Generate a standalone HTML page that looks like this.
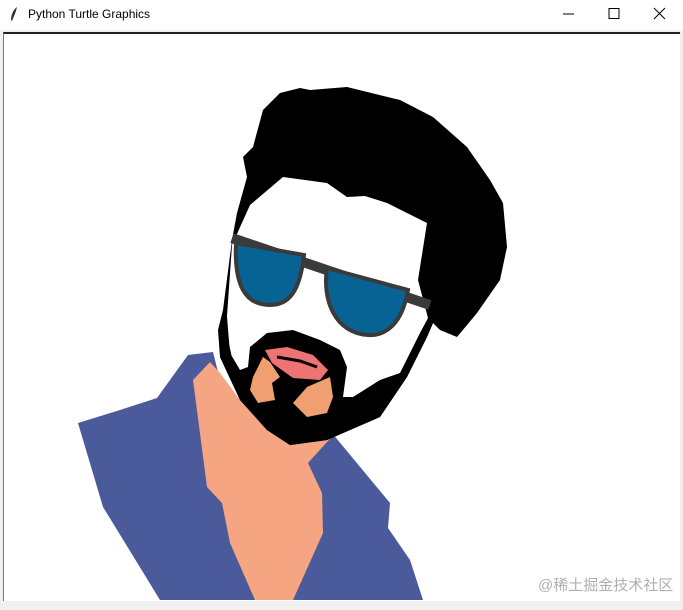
<!DOCTYPE html>
<html><head><style>
body{margin:0;width:683px;height:610px;overflow:hidden;background:#f0f0f0;font-family:"Liberation Sans","Noto Sans CJK SC",sans-serif;position:relative}
.tb{position:absolute;left:0;top:0;width:683px;height:30px;background:#fff}
.t{position:absolute;left:28px;top:7px;font-size:12px;color:#000}
.cv{position:absolute;left:3px;top:32px;width:676px;height:567px;background:#fff;border-top:2px solid #222;border-left:1px solid #777}
.wm{position:absolute;left:538px;top:574px;font-size:15px;color:#b0b0b0}
</style></head><body>
<div class="tb">
<svg style="position:absolute;left:9px;top:6px" width="10" height="16"><path d="M8 1 C4 4 2 9 2 14 L3 15 C5 10 7 6 8 1Z" fill="#333"/></svg>
<div class="t">Python Turtle Graphics</div>
<svg style="position:absolute;left:560px;top:6px" width="110" height="16">
<line x1="3" y1="8" x2="14" y2="8" stroke="#000"/>
<rect x="49" y="2.5" width="10" height="10" fill="none" stroke="#000"/>
<path d="M94 2 L105 13 M105 2 L94 13" stroke="#000"/>
</svg>
</div>
<div class="cv"></div>
<svg style="position:absolute;left:0;top:0" width="683" height="610">
<!-- shirt -->
<polygon fill="#4b5a9a" points="78,423 120,410 157,398 188,355 213,352 225,400 300,440 327,427 390,503 388,528 410,560 423,600 160,600 103,507"/>
<!-- skin -->
<polygon fill="#f5a582" points="193,380 210,362 220,373 240,400 267,430 290,445 327,440 338,430 308,463 322,493 323,533 293,600 255,600 230,543 222,503 207,487"/>
<!-- hair/head black -->
<polygon fill="#000" points="280,93 300,88 310,90 347,87 400,100 433,117 467,147 490,180 503,203 507,247 500,280 477,313 457,337 440,330 433,323 427,337 407,377 380,417 357,427 327,440 290,445 267,430 240,400 220,357 218,330 223,310 232,240 237,213 247,177 243,157 253,147 263,110"/>
<!-- face white -->
<polygon fill="#fff" points="283,177 305,180 327,183 347,197 365,196 387,203 427,223 418,280 428,318 420,340 405,380 370,405 330,420 280,420 240,395 226,330 232,245 250,205"/>
<!-- beard -->
<polygon fill="#000" points="433,323 427,337 407,377 380,417 357,427 327,440 290,445 267,430 240,400 220,357 223,313 227,317 230,353 240,370 248,367 250,347 267,333 293,330 320,340 340,350 347,367 343,397 353,397 380,380 400,373 420,333 428,318"/>
<!-- skin chin patches -->
<polygon fill="#f0a070" points="263,357 253,377 250,390 258,403 275,400 272,383 280,377 270,362"/>
<polygon fill="#f0a070" points="307,387 330,377 333,397 327,413 307,417 293,403"/>
<!-- lips -->
<polygon fill="#ee7474" points="265,350 287,347 313,355 328,370 320,380 293,378 272,363"/>
<path d="M277 357 L300 361 L317 367" stroke="#000" stroke-width="3" fill="none"/>
<!-- glasses -->
<line x1="232" y1="238" x2="430" y2="305" stroke="#3a3a3a" stroke-width="10"/>
<path d="M236 243 L304 255 C300 290 290 305 270 305 C245 305 234 285 236 243Z" fill="#066394" stroke="#3a3a3a" stroke-width="4"/>
<path d="M327 268 L408 290 C402 325 385 336 368 335 C335 333 322 300 327 268Z" fill="#066394" stroke="#3a3a3a" stroke-width="4"/>
</svg>
<div class="wm">@稀土掘金技术社区</div>
</body></html>
